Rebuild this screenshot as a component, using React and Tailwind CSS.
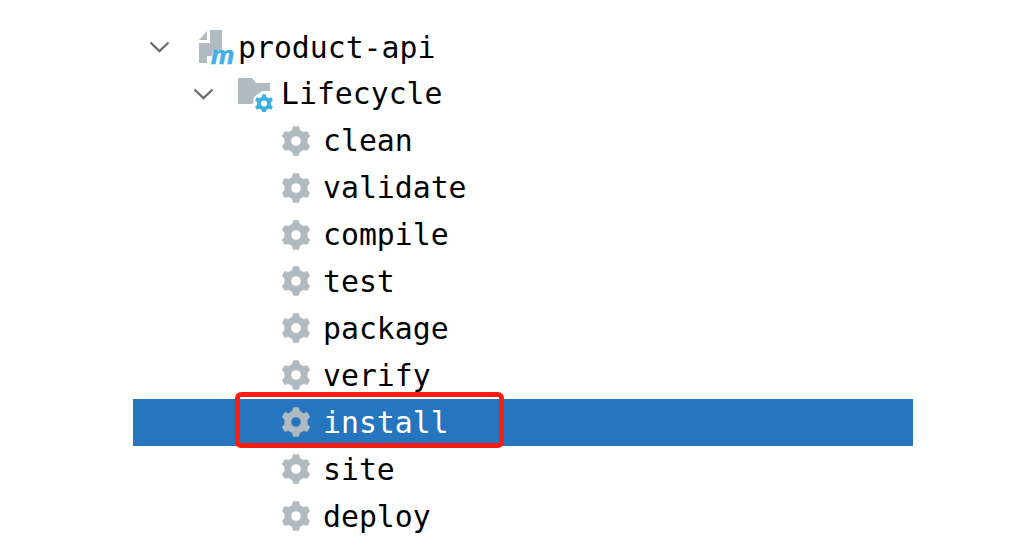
const font = { fontFamily: '"DejaVu Sans Mono", monospace' };

function gearPath(cx, cy, rOuter, rInner, teeth) {
  let d = "";
  const step = (Math.PI * 2) / teeth;
  for (let i = 0; i < teeth; i++) {
    const a = -Math.PI / 2 + i * step;
    const pts = [
      [a - step * 0.3, rInner],
      [a - step * 0.17, rOuter],
      [a + step * 0.17, rOuter],
      [a + step * 0.3, rInner],
    ];
    for (const [t, r] of pts) {
      d += `${d ? "L" : "M"}${(cx + r * Math.cos(t)).toFixed(2)} ${(cy + r * Math.sin(t)).toFixed(2)}`;
    }
  }
  return d + "Z";
}

function Gear({ color = "#b0bac1" }) {
  return (
    <svg width="30" height="30" viewBox="0 0 30 30" className="shrink-0">
      <path
        fillRule="evenodd"
        fill={color}
        stroke={color}
        strokeWidth="0.8"
        strokeLinejoin="round"
        d={gearPath(15, 15, 14.6, 11.4, 6) + " M15 9.8a5.2 5.2 0 1 0 0 10.4a5.2 5.2 0 1 0 0-10.4Z"}
      />
    </svg>
  );
}

function Chevron() {
  return (
    <svg width="24" height="14" viewBox="0 0 24 14" className="shrink-0">
      <path d="M2.5 2.5 L11.5 11 L20.5 2.5" fill="none" stroke="#6e6e6e" strokeWidth="2.4" />
    </svg>
  );
}

function ModuleIcon() {
  return (
    <svg width="39" height="46" viewBox="0 0 39 46" className="shrink-0">
      <path d="M11 6H23V26H15L13 32H8V39H0V19H11Z" fill="#b0bac1" />
      <path d="M8 7V16H0Z" fill="#b0bac1" />
      <text x="12" y="40" fontFamily='"Liberation Sans", sans-serif' fontStyle="italic" fontWeight="700" fontSize="26" fill="#3fb1e0" stroke="#3fb1e0" strokeWidth="0.7">m</text>
    </svg>
  );
}

function FolderIcon() {
  return (
    <svg width="36" height="36" viewBox="0 0 36 36" className="shrink-0">
      <path d="M0 2H14L18 7H32V15H24L16 21L15 28H0Z" fill="#b0bac1" />
      <path
        fillRule="evenodd"
        fill="#3fb1e0"
        d={gearPath(26, 27.5, 9.5, 7, 6) + " M26 24.5a3 3 0 1 0 0 6a3 3 0 1 0 0-6Z"}
      />
    </svg>
  );
}

const items = ["clean", "validate", "compile", "test", "package", "verify", "install", "site", "deploy"];

export default function App() {
  return (
    <div className="w-[1014px] h-[550px] bg-white overflow-hidden pt-[23.5px] pl-[133px]" style={font}>
      <div className="w-[780px] flex flex-col text-[29.8px] text-black">
        <div className="h-[46.9px] flex items-center pl-[15px]">
          <Chevron />
          <span className="ml-[27px]"><ModuleIcon /></span>
          <span className="pt-[2px]">product-api</span>
        </div>
        <div className="h-[46.9px] flex items-center pl-[59px]">
          <Chevron />
          <span className="ml-[22px]"><FolderIcon /></span>
          <span className="ml-[7px] pt-[2px]">Lifecycle</span>
        </div>
        {items.map((name) => {
          const selected = name === "install";
          return (
            <div
              key={name}
              className={`relative h-[46.9px] flex items-center pl-[148px] ${selected ? "bg-[#2675bf] text-white" : ""}`}
            >
              <Gear />
              <span className="ml-[12px] pt-[2px]">{name}</span>
              {selected && (
                <div className="absolute left-[102px] top-[-7px] w-[269px] h-[56px] border-[5px] border-[#fd1c10] rounded-[6px]" />
              )}
            </div>
          );
        })}
      </div>
    </div>
  );
}
